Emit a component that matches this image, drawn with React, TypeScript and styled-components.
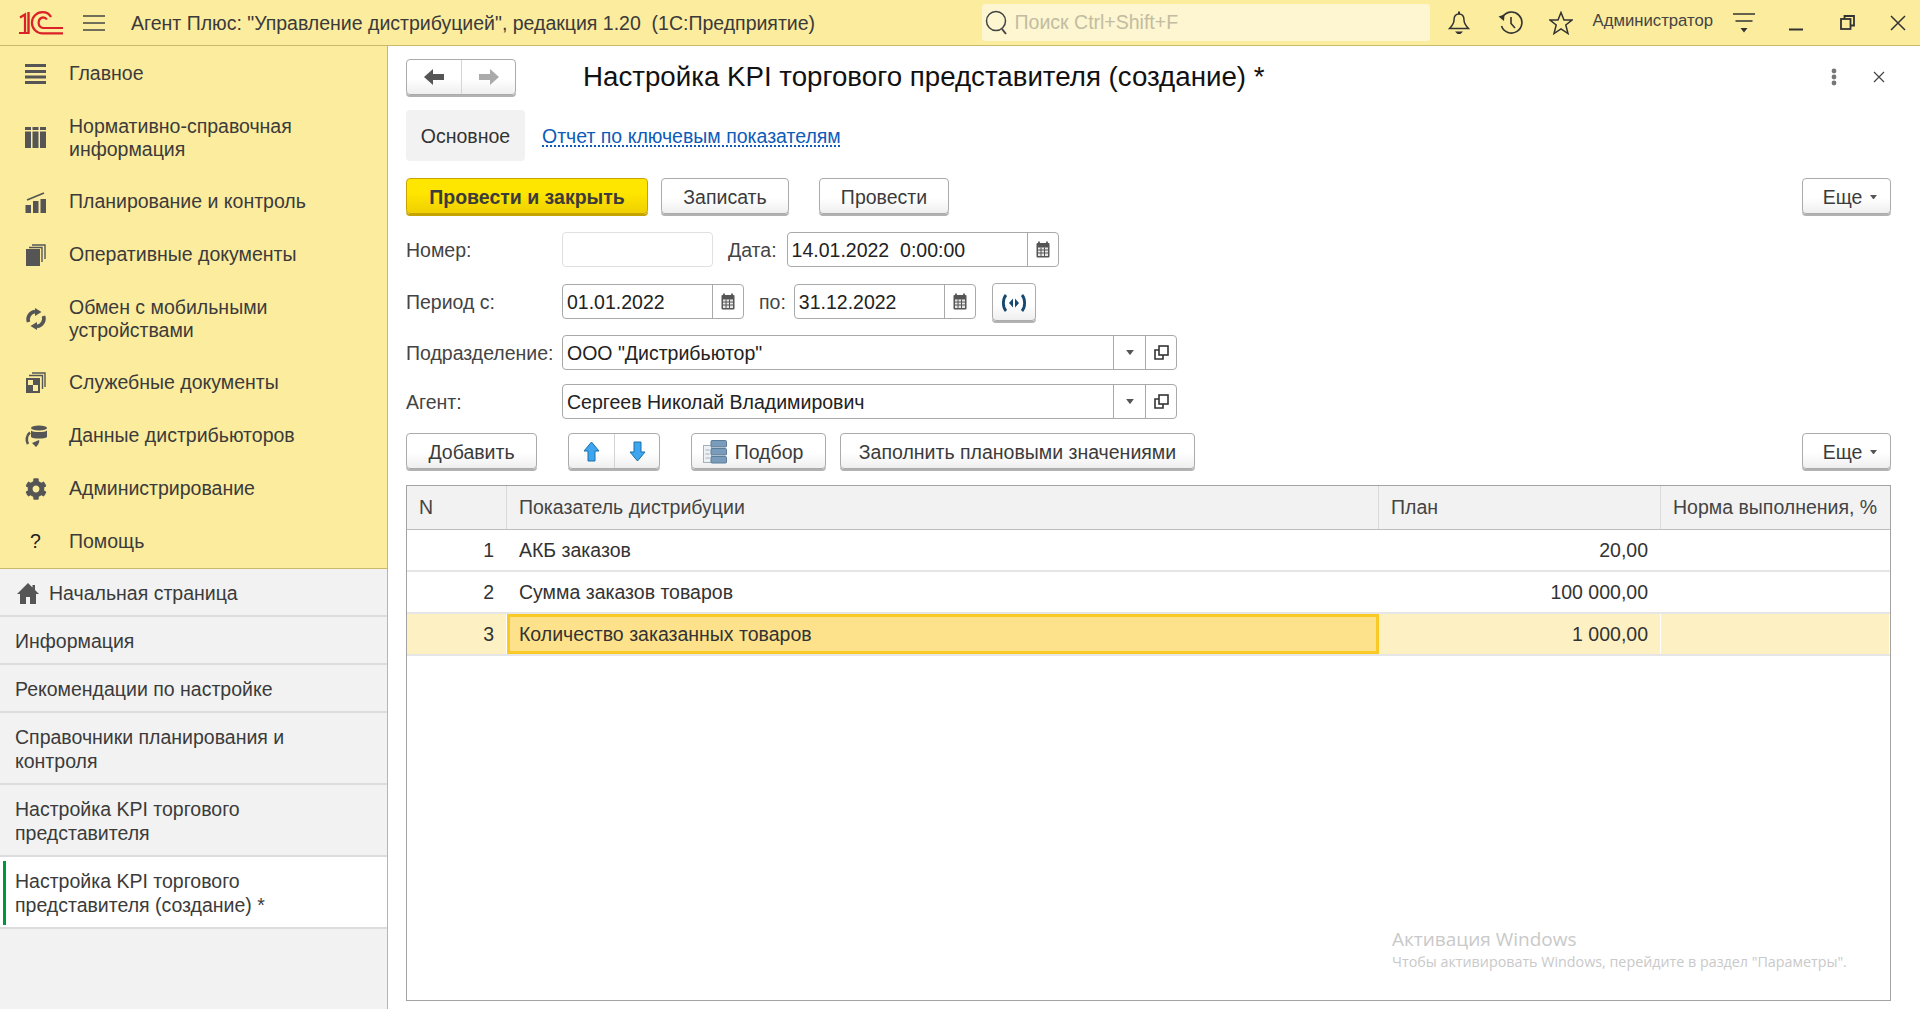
import styled, { createGlobalStyle } from "styled-components";
import { FaCog } from "react-icons/fa";

const GlobalStyle = createGlobalStyle`
  html, body {
    margin: 0;
    padding: 0;
    background: #fff;
    overflow: hidden;
  }
  * {
    box-sizing: border-box;
  }
`;

const Page = styled.div`
  position: relative;
  width: 1920px;
  height: 1009px;
  display: flex;
  flex-direction: column;
  overflow: hidden;
  font-family: "Liberation Sans", Arial, sans-serif;
  font-size: 19.5px;
  color: #333;
`;

const TopBar = styled.header`
  height: 46px;
  flex: none;
  display: flex;
  align-items: center;
  padding: 0 14px 0 19px;
  background: #fbec9e;
  border-bottom: 1.5px solid #c9ba6a;
`;

const TopTitle = styled.div`
  flex: 1;
  margin-left: 26px;
  padding-top: 1px;
  white-space: nowrap;
  color: #3a3a3a;
`;

const SearchBox = styled.div`
  width: 448px;
  height: 37px;
  display: flex;
  align-items: center;
  gap: 6px;
  padding-left: 3px;
  background: #fdf6d0;
  border-radius: 3px;
  color: #c2bca2;
`;

const TopIcon = styled.span<{ $left: number }>`
  display: flex;
  margin-left: ${(p) => p.$left}px;
  color: #333;
`;

const UserName = styled.span`
  margin-left: 20px;
  margin-top: -4px;
  font-size: 16.7px;
  white-space: nowrap;
  color: #444;
`;

const Body = styled.div`
  flex: 1;
  display: flex;
  min-height: 0;
`;

const Sidebar = styled.aside`
  width: 388px;
  flex: none;
  display: flex;
  flex-direction: column;
  background: #f2f2f2;
  border-right: 1px solid #c9ba6a;
`;

const NavList = styled.nav`
  flex: none;
  padding-top: 1px;
  background: #fbec9e;
  border-bottom: 1.5px solid #c9ba6a;
`;

const NavItem = styled.div`
  min-height: 53px;
  display: flex;
  align-items: center;
  padding: 15px 10px 15px 0;
  line-height: 22.5px;
  color: #3b3b3b;
`;

const NavIcon = styled.span`
  width: 69px;
  flex: none;
  display: flex;
  justify-content: center;
  padding-left: 2px;
  color: #555;
`;

const QuestionMark = styled.span`
  color: #222;
`;

const TabItem = styled.div<{ $active?: boolean }>`
  position: relative;
  display: flex;
  align-items: center;
  gap: 10px;
  padding: 12px 20px 10px 15px;
  line-height: 24px;
  color: #3b3b3b;
  background: ${(p) => (p.$active ? "#fff" : "transparent")};
  border-bottom: 2px solid #dcdcdc;

  &::before {
    content: "";
    display: ${(p) => (p.$active ? "block" : "none")};
    position: absolute;
    left: 3px;
    top: 4px;
    width: 3px;
    height: 64px;
    background: #00963f;
  }
`;

const Content = styled.main`
  flex: 1;
  min-width: 0;
  display: flex;
  flex-direction: column;
  padding: 12px 29px 8px 18px;
  background: #fff;
`;

const TitleRow = styled.div`
  height: 38px;
  flex: none;
  display: flex;
  align-items: center;
`;

const ButtonGroup = styled.div<{ $left?: number }>`
  display: flex;
  height: 36px;
  margin-left: ${(p) => p.$left ?? 0}px;
  border: 1px solid #ababab;
  border-radius: 4px;
  background: linear-gradient(#fff 55%, #efefef);
  box-shadow: 0 2px 0 #b2b2b2;
`;

const GroupCell = styled.div<{ $width: number; $divider?: boolean }>`
  width: ${(p) => p.$width}px;
  display: flex;
  align-items: center;
  justify-content: center;
  border-left: ${(p) => (p.$divider ? "1px solid #d4d4d4" : "none")};
`;

const Title = styled.h1`
  margin: 0 0 0 67px;
  font-size: 27.7px;
  font-weight: 400;
  line-height: 38px;
  color: #111;
  white-space: nowrap;
`;

const TitleActions = styled.div`
  margin-left: auto;
  display: flex;
  align-items: center;
  gap: 36px;
  padding-right: 6px;
`;

const TabsRow = styled.div`
  margin-top: 14px;
  height: 51px;
  flex: none;
  display: flex;
  align-items: center;
`;

const SelectedTab = styled.div`
  height: 51px;
  width: 119px;
  display: flex;
  align-items: center;
  justify-content: center;
  padding-top: 1px;
  background: #f2f2f2;
  border-radius: 4px;
`;

const FormLink = styled.a`
  margin-left: 17px;
  padding-top: 1px;
  color: #0e5bb8;
  text-decoration: underline dotted;
  text-underline-offset: 3px;
  white-space: nowrap;
`;

const Toolbar = styled.div<{ $top: number }>`
  margin-top: ${(p) => p.$top}px;
  height: 36px;
  flex: none;
  display: flex;
  align-items: center;
`;

const Button = styled.button<{ $width: number; $height?: number; $left?: number; $primary?: boolean }>`
  width: ${(p) => p.$width}px;
  height: ${(p) => p.$height ?? 36}px;
  flex: none;
  margin-left: ${(p) => p.$left ?? 0}px;
  display: flex;
  align-items: center;
  justify-content: center;
  gap: 8px;
  padding: 2px 0 0;
  font: inherit;
  font-weight: ${(p) => (p.$primary ? 700 : 400)};
  color: #3b3b3b;
  border-radius: 4px;
  border: 1px solid ${(p) => (p.$primary ? "#c9a400" : "#ababab")};
  background: ${(p) =>
    p.$primary
      ? "linear-gradient(#ffe600 40%, #f0d000)"
      : "linear-gradient(#fff 55%, #efefef)"};
  box-shadow: 0 2px 0 ${(p) => (p.$primary ? "#c4a500" : "#b2b2b2")};
`;

const MoreButton = styled(Button)`
  margin-left: auto;
  padding-left: 7px;
`;

const PickButton = styled(Button)`
  padding-right: 11px;
`;

const FieldRow = styled.div<{ $top: number }>`
  margin-top: ${(p) => p.$top}px;
  height: 35px;
  flex: none;
  display: flex;
  align-items: center;
`;

const FieldLabel = styled.label<{ $width?: number; $left?: number }>`
  width: ${(p) => (p.$width ? `${p.$width}px` : "auto")};
  flex: none;
  margin-left: ${(p) => p.$left ?? 0}px;
  padding-top: 1px;
  color: #444;
  white-space: nowrap;
`;

const Field = styled.div<{ $width: number; $left?: number; $disabled?: boolean }>`
  width: ${(p) => p.$width}px;
  height: 35px;
  flex: none;
  margin-left: ${(p) => p.$left ?? 0}px;
  display: flex;
  border: 1px solid ${(p) => (p.$disabled ? "#e0e0e0" : "#a9a9a9")};
  border-radius: 4px;
  background: #fff;
`;

const FieldInput = styled.input`
  flex: 1;
  min-width: 0;
  border: 0;
  outline: 0;
  padding: 1px 4px 0;
  background: transparent;
  font: inherit;
  color: #222;
`;

const FieldAddon = styled.span<{ $width: number }>`
  width: ${(p) => p.$width}px;
  flex: none;
  display: flex;
  align-items: center;
  justify-content: center;
  border-left: 1px solid #a9a9a9;
  color: #444;
`;

const Grid = styled.div`
  margin-top: 16px;
  flex: 1;
  min-height: 0;
  border: 1px solid #a3a3a3;
`;

const GridRow = styled.div<{ $selected?: boolean }>`
  display: grid;
  grid-template-columns: 100px 872px 282px 1fr;
  height: 42px;
  background: ${(p) => (p.$selected ? "#fdf1c4" : "transparent")};
  border-bottom: 2px solid #e6e6e6;
`;

const HeadRow = styled(GridRow)`
  height: 44px;
  background: #f2f2f2;
  border-bottom: 1px solid #bdbdbd;
`;

const HeadCell = styled.div`
  display: flex;
  align-items: center;
  padding: 0 12px;
  color: #444;
  white-space: nowrap;
  border-right: 1px solid #dadada;

  &:last-child {
    border-right: 0;
  }
`;

const Cell = styled.div<{ $right?: boolean; $current?: boolean }>`
  display: flex;
  align-items: center;
  justify-content: ${(p) => (p.$right ? "flex-end" : "flex-start")};
  padding: 1px ${(p) => (p.$current ? 9 : 12)}px 0;
  color: #333;
  white-space: nowrap;
  background: ${(p) => (p.$current ? "#fde28b" : "transparent")};
  border: ${(p) => (p.$current ? "3px solid #fbc923" : "none")};
  border-right: ${(p) => (p.$current ? "3px solid #fbc923" : "1px solid #fff")};
`;

const Watermark = styled.div`
  position: absolute;
  left: 1392px;
  top: 927px;
  color: #c9c9c9;
  pointer-events: none;
  font-family: "Open Sans", "Noto Sans", sans-serif;
`;

const WatermarkTitle = styled.div`
  font-size: 19px;
  line-height: 24px;
`;

const WatermarkNote = styled.div`
  font-size: 14.3px;
  line-height: 22px;
  white-space: nowrap;
`;

function Logo() {
  return (
    <svg width="44" height="24" viewBox="0 0 44 24" fill="none" stroke="#da2128" strokeWidth="2.2">
      <path d="M1 6.5 L6 3.5 V22 M0 22 H9" />
      <path d="M9.5 1 V23" strokeWidth="2.4" />
      <path d="M44 22.3 H23.5 A10.6 10.6 0 0 1 23.5 1.1 C27.5 1.1 30.5 3.2 32 6" />
      <path d="M44 17 H24 A5.4 5.4 0 0 1 24 6.4 C25.5 6.4 27 7 28 8.5" />
    </svg>
  );
}

function Hamburger() {
  return (
    <svg width="22" height="16" viewBox="0 0 22 16" stroke="#444" strokeWidth="1.4" style={{ marginLeft: 20 }}>
      <path d="M0 1H22M0 8H22M0 15H22" />
    </svg>
  );
}

function SearchGlyph() {
  return (
    <svg width="24" height="26" viewBox="0 0 24 26" fill="none" stroke="#444" strokeWidth="1.5">
      <circle cx="11" cy="11" r="9.5" />
      <path d="M17 19 L21 24" strokeWidth="2" />
    </svg>
  );
}

function Bell() {
  return (
    <svg width="22" height="24" viewBox="0 0 22 24" fill="none" stroke="#333" strokeWidth="1.5">
      <path d="M11 3C7 3 6 6 6 9C6 13 4 15 1.5 17.5H20.5C18 15 16 13 16 9C16 6 15 3 11 3Z" />
      <path d="M11 0.5V3" strokeWidth="2" />
      <path d="M7 20.5H15L12.5 23H9.5Z" fill="#333" stroke="none" />
    </svg>
  );
}

function HistoryGlyph() {
  return (
    <svg width="25" height="24" viewBox="0 0 25 24" fill="none" stroke="#333" strokeWidth="1.6">
      <path d="M4.5 6A10.5 10.5 0 1 1 3.5 15" />
      <path d="M13 6V12.5L17 17" />
      <path d="M0.5 5.5L6.5 3.5L6 10Z" fill="#333" stroke="none" />
    </svg>
  );
}

function Star() {
  return (
    <svg width="24" height="24" viewBox="0 0 24 24" fill="none" stroke="#333" strokeWidth="1.5">
      <path d="M12 1.5L15 9H23L16.8 14L19 22.5L12 17.8L5 22.5L7.2 14L1 9H9Z" />
    </svg>
  );
}

function Filter() {
  return (
    <svg width="22" height="20" viewBox="0 0 22 20" style={{ display: "block" }}>
      <path d="M0 1H22M2.5 8H19.5" stroke="#333" strokeWidth="1.4" />
      <path d="M7.5 15H14.5L11 19.5Z" fill="#333" />
    </svg>
  );
}

function WindowMin() {
  return (
    <svg width="14" height="16" viewBox="0 0 14 16">
      <path d="M0 14.5H14" stroke="#333" strokeWidth="2" />
    </svg>
  );
}

function WindowRestore() {
  return (
    <svg width="15" height="15" viewBox="0 0 15 15" fill="none" stroke="#333" strokeWidth="1.8">
      <rect x="1" y="4" width="9.5" height="10" />
      <path d="M4.5 4V1H14V10.5H10.5" />
    </svg>
  );
}

function WindowClose() {
  return (
    <svg width="16" height="16" viewBox="0 0 16 16" stroke="#333" strokeWidth="1.5">
      <path d="M1 1L15 15M15 1L1 15" />
    </svg>
  );
}

function IconMenu() {
  return (
    <svg width="22" height="22" viewBox="0 0 22 22" fill="#555">
      <rect y="1" width="21" height="3" />
      <rect y="7" width="21" height="3" />
      <rect y="12.5" width="21" height="3" />
      <rect y="18" width="21" height="3" />
    </svg>
  );
}

function IconColumns() {
  return (
    <svg width="22" height="22" viewBox="0 0 22 22" fill="#555">
      <path d="M0 0H6V3H0ZM7.5 0H13.5V3H7.5ZM15 0H21V3H15Z" />
      <path d="M0 4.5H6V21H0ZM7.5 4.5H13.5V21H7.5ZM15 4.5H21V21H15Z" />
    </svg>
  );
}

function IconChart() {
  return (
    <svg width="22" height="22" viewBox="0 0 22 22" fill="#555">
      <rect x="0.5" y="14" width="5.5" height="8" />
      <rect x="8" y="10" width="5.5" height="12" />
      <rect x="15.5" y="8" width="5.5" height="14" />
      <path d="M2 9L19 2" stroke="#555" strokeWidth="1.8" />
    </svg>
  );
}

function IconDocs() {
  return (
    <svg width="20" height="22" viewBox="0 0 20 22" fill="#555">
      <rect x="0" y="5" width="14" height="17" />
      <path d="M3 3.5H16V18M6 1H19V15" fill="none" stroke="#555" strokeWidth="1.4" />
    </svg>
  );
}

function IconSync() {
  return (
    <svg width="22" height="22" viewBox="0 0 22 22" fill="none" stroke="#555" strokeWidth="3.6">
      <path d="M3.5 14A8 8 0 0 1 10 3.5" />
      <path d="M18.5 8A8 8 0 0 1 12 18.5" />
      <path d="M10 0L16.5 4L10 8ZM12 22L5.5 18L12 14Z" fill="#555" stroke="none" />
    </svg>
  );
}

function IconService() {
  return (
    <svg width="20" height="22" viewBox="0 0 20 22" fill="#555">
      <path d="M0 6H14V21H0ZM2 8V13H7V8ZM7 13V19H12V13Z" fillRule="evenodd" />
      <path d="M3 3.5H16.5V17M6 1H19V15" fill="none" stroke="#555" strokeWidth="1.4" />
    </svg>
  );
}

function IconData() {
  return (
    <svg width="24" height="22" viewBox="0 0 24 22" fill="#555">
      <ellipse cx="15" cy="3" rx="8" ry="2.5" />
      <path d="M7 5.5C9 7.5 21 7.5 23 5.5V12C21 14 9 14 7 12Z" />
      <path d="M4 19A9 9 0 0 1 6 7.5" fill="none" stroke="#555" strokeWidth="2.6" />
      <path d="M12 22L8 18L15 15C16 17 14 20 12 22Z" />
    </svg>
  );
}

function HomeGlyph() {
  return (
    <svg width="22" height="21" viewBox="0 0 22 21" fill="#555" style={{ marginLeft: 2, flex: "none" }}>
      <path d="M11 0L15.5 4.5V2H18V7L22 11H19V21H13V14H9V21H3V11H0Z" />
    </svg>
  );
}

function BackArrow({ color }: { color: string }) {
  return (
    <svg width="20" height="16" viewBox="0 0 20 16" fill={color}>
      <path d="M0 8L9 0V5H20V11H9V16Z" />
    </svg>
  );
}

function ForwardArrow({ color }: { color: string }) {
  return (
    <svg width="20" height="16" viewBox="0 0 20 16" fill={color}>
      <path d="M20 8L11 0V5H0V11H11V16Z" />
    </svg>
  );
}

function Calendar() {
  return (
    <svg width="14" height="17" viewBox="0 0 14 17">
      <path d="M3 0.5V4M11 0.5V4" stroke="#444" strokeWidth="1.6" />
      <rect x="0.5" y="2" width="13" height="14.5" rx="1" fill="#555" />
      <rect x="2" y="6.5" width="10" height="8.5" fill="#e8e8e8" />
      <path d="M2 9H12M2 12H12M5 6.5V15M8.5 6.5V15" stroke="#555" strokeWidth="1" />
    </svg>
  );
}

function Caret({ size = 9 }: { size?: number }) {
  return (
    <svg width={size} height={size * 0.65} viewBox="0 0 9 6" fill="#555">
      <path d="M0 0H9L4.5 6Z" />
    </svg>
  );
}

function OpenBox() {
  return (
    <svg width="15" height="15" viewBox="0 0 15 15" fill="none" stroke="#333" strokeWidth="1.6">
      <rect x="5" y="1" width="9" height="9" />
      <path d="M5 5H1V14H9V10" />
    </svg>
  );
}

function PeriodGlyph() {
  return (
    <svg width="26" height="18" viewBox="0 0 26 18">
      <path d="M5 1C1.5 5 1.5 13 5 17M21 1C24.5 5 24.5 13 21 17" fill="none" stroke="#17496f" strokeWidth="2.8" />
      <path d="M12 4.5V13.5L8 9ZM14 4.5V13.5L18 9Z" fill="#17496f" />
    </svg>
  );
}

function UpArrow() {
  return (
    <svg width="17" height="21" viewBox="0 0 17 21">
      <path d="M8.5 1L16 10H12V20H5V10H1Z" fill="#3da6ee" stroke="#1b6fa8" />
    </svg>
  );
}

function DownArrow() {
  return (
    <svg width="17" height="21" viewBox="0 0 17 21">
      <path d="M8.5 20L16 11H12V1H5V11H1Z" fill="#3da6ee" stroke="#1b6fa8" />
    </svg>
  );
}

function PickGlyph() {
  return (
    <svg width="24" height="24" viewBox="0 0 24 24">
      <rect x="0.5" y="5.5" width="8" height="17" fill="#eef1f3" stroke="#a5b0b8" />
      <path d="M2.5 10H6.5M2.5 14H6.5M2.5 18H6.5" stroke="#a5b0b8" />
      <rect x="8" y="0.5" width="15.5" height="6.5" rx="1" fill="#7a9cba" stroke="#5a7d9b" />
      <rect x="8" y="8.5" width="15.5" height="6.5" rx="1" fill="#7a9cba" stroke="#5a7d9b" />
      <rect x="8" y="16.5" width="15.5" height="6.5" rx="1" fill="#7a9cba" stroke="#5a7d9b" />
    </svg>
  );
}

function KebabGlyph() {
  return (
    <svg width="6" height="18" viewBox="0 0 6 18" fill="#777">
      <circle cx="3" cy="3" r="2.4" />
      <circle cx="3" cy="9" r="2.4" />
      <circle cx="3" cy="15" r="2.4" />
    </svg>
  );
}

function SmallClose() {
  return (
    <svg width="12" height="12" viewBox="0 0 12 12" stroke="#444" strokeWidth="1.2">
      <path d="M1 1L11 11M11 1L1 11" />
    </svg>
  );
}

const navItems = [
  { icon: <IconMenu />, text: "Главное" },
  { icon: <IconColumns />, text: "Нормативно-справочная информация" },
  { icon: <IconChart />, text: "Планирование и контроль" },
  { icon: <IconDocs />, text: "Оперативные документы" },
  { icon: <IconSync />, text: "Обмен с мобильными устройствами" },
  { icon: <IconService />, text: "Служебные документы" },
  { icon: <IconData />, text: "Данные дистрибьюторов" },
  { icon: <FaCog size={22} />, text: "Администрирование" },
  { icon: <QuestionMark>?</QuestionMark>, text: "Помощь" },
];

const openTabs = [
  "Информация",
  "Рекомендации по настройке",
  "Справочники планирования и контроля",
  "Настройка KPI торгового представителя",
];

const rows = [
  { n: 1, name: "АКБ заказов", plan: "20,00" },
  { n: 2, name: "Сумма заказов товаров", plan: "100 000,00" },
  { n: 3, name: "Количество заказанных товаров", plan: "1 000,00" },
];

export default function App() {
  return (
    <Page>
      <GlobalStyle />
      <TopBar>
        <Logo />
        <Hamburger />
        <TopTitle>Агент Плюс: "Управление дистрибуцией", редакция 1.20 &nbsp;(1С:Предприятие)</TopTitle>
        <SearchBox>
          <SearchGlyph />
          Поиск Ctrl+Shift+F
        </SearchBox>
        <TopIcon $left={18}><Bell /></TopIcon>
        <TopIcon $left={28}><HistoryGlyph /></TopIcon>
        <TopIcon $left={26}><Star /></TopIcon>
        <UserName>Администратор</UserName>
        <TopIcon $left={20}><Filter /></TopIcon>
        <TopIcon $left={34}><WindowMin /></TopIcon>
        <TopIcon $left={37}><WindowRestore /></TopIcon>
        <TopIcon $left={35}><WindowClose /></TopIcon>
      </TopBar>
      <Body>
        <Sidebar>
          <NavList>
            {navItems.map((item) => (
              <NavItem key={item.text}>
                <NavIcon>{item.icon}</NavIcon>
                <span>{item.text}</span>
              </NavItem>
            ))}
          </NavList>
          <TabItem>
            <HomeGlyph />
            Начальная страница
          </TabItem>
          {openTabs.map((tab) => (
            <TabItem key={tab}>{tab}</TabItem>
          ))}
          <TabItem $active>Настройка KPI торгового представителя (создание) *</TabItem>
        </Sidebar>
        <Content>
          <TitleRow>
            <ButtonGroup>
              <GroupCell $width={54}><BackArrow color="#555" /></GroupCell>
              <GroupCell $width={54} $divider><ForwardArrow color="#aaa" /></GroupCell>
            </ButtonGroup>
            <Title>Настройка KPI торгового представителя (создание) *</Title>
            <TitleActions>
              <KebabGlyph />
              <SmallClose />
            </TitleActions>
          </TitleRow>
          <TabsRow>
            <SelectedTab>Основное</SelectedTab>
            <FormLink>Отчет по ключевым показателям</FormLink>
          </TabsRow>
          <Toolbar $top={17}>
            <Button $primary $width={242}>Провести и закрыть</Button>
            <Button $width={128} $left={13}>Записать</Button>
            <Button $width={130} $left={30}>Провести</Button>
            <MoreButton $width={89}>Еще <Caret size={7} /></MoreButton>
          </Toolbar>
          <FieldRow $top={18}>
            <FieldLabel $width={156}>Номер:</FieldLabel>
            <Field $width={151} $disabled />
            <FieldLabel $left={15}>Дата:</FieldLabel>
            <Field $width={272} $left={10}>
              <FieldInput readOnly value="14.01.2022  0:00:00" />
              <FieldAddon $width={31}><Calendar /></FieldAddon>
            </Field>
          </FieldRow>
          <FieldRow $top={17}>
            <FieldLabel $width={156}>Период с:</FieldLabel>
            <Field $width={182}>
              <FieldInput readOnly value="01.01.2022" />
              <FieldAddon $width={31}><Calendar /></FieldAddon>
            </Field>
            <FieldLabel $left={15}>по:</FieldLabel>
            <Field $width={182} $left={8}>
              <FieldInput readOnly value="31.12.2022" />
              <FieldAddon $width={31}><Calendar /></FieldAddon>
            </Field>
            <Button $width={44} $height={38} $left={16}><PeriodGlyph /></Button>
          </FieldRow>
          <FieldRow $top={16}>
            <FieldLabel $width={156}>Подразделение:</FieldLabel>
            <Field $width={615}>
              <FieldInput readOnly value={'ООО "Дистрибьютор"'} />
              <FieldAddon $width={32}><Caret size={8} /></FieldAddon>
              <FieldAddon $width={31}><OpenBox /></FieldAddon>
            </Field>
          </FieldRow>
          <FieldRow $top={14}>
            <FieldLabel $width={156}>Агент:</FieldLabel>
            <Field $width={615}>
              <FieldInput readOnly value="Сергеев Николай Владимирович" />
              <FieldAddon $width={32}><Caret size={8} /></FieldAddon>
              <FieldAddon $width={31}><OpenBox /></FieldAddon>
            </Field>
          </FieldRow>
          <Toolbar $top={14}>
            <Button $width={131}>Добавить</Button>
            <ButtonGroup $left={31}>
              <GroupCell $width={45}><UpArrow /></GroupCell>
              <GroupCell $width={45} $divider><DownArrow /></GroupCell>
            </ButtonGroup>
            <PickButton $width={135} $left={31}><PickGlyph />Подбор</PickButton>
            <Button $width={355} $left={14}>Заполнить плановыми значениями</Button>
            <MoreButton $width={89}>Еще <Caret size={7} /></MoreButton>
          </Toolbar>
          <Grid>
            <HeadRow>
              <HeadCell>N</HeadCell>
              <HeadCell>Показатель дистрибуции</HeadCell>
              <HeadCell>План</HeadCell>
              <HeadCell>Норма выполнения, %</HeadCell>
            </HeadRow>
            {rows.map((row) => {
              const selected = row.n === 3;
              return (
                <GridRow key={row.n} $selected={selected}>
                  <Cell $right>{row.n}</Cell>
                  <Cell $current={selected}>{row.name}</Cell>
                  <Cell $right>{row.plan}</Cell>
                  <Cell />
                </GridRow>
              );
            })}
          </Grid>
        </Content>
      </Body>
      <Watermark>
        <WatermarkTitle>Активация Windows</WatermarkTitle>
        <WatermarkNote>Чтобы активировать Windows, перейдите в раздел "Параметры".</WatermarkNote>
      </Watermark>
    </Page>
  );
}
